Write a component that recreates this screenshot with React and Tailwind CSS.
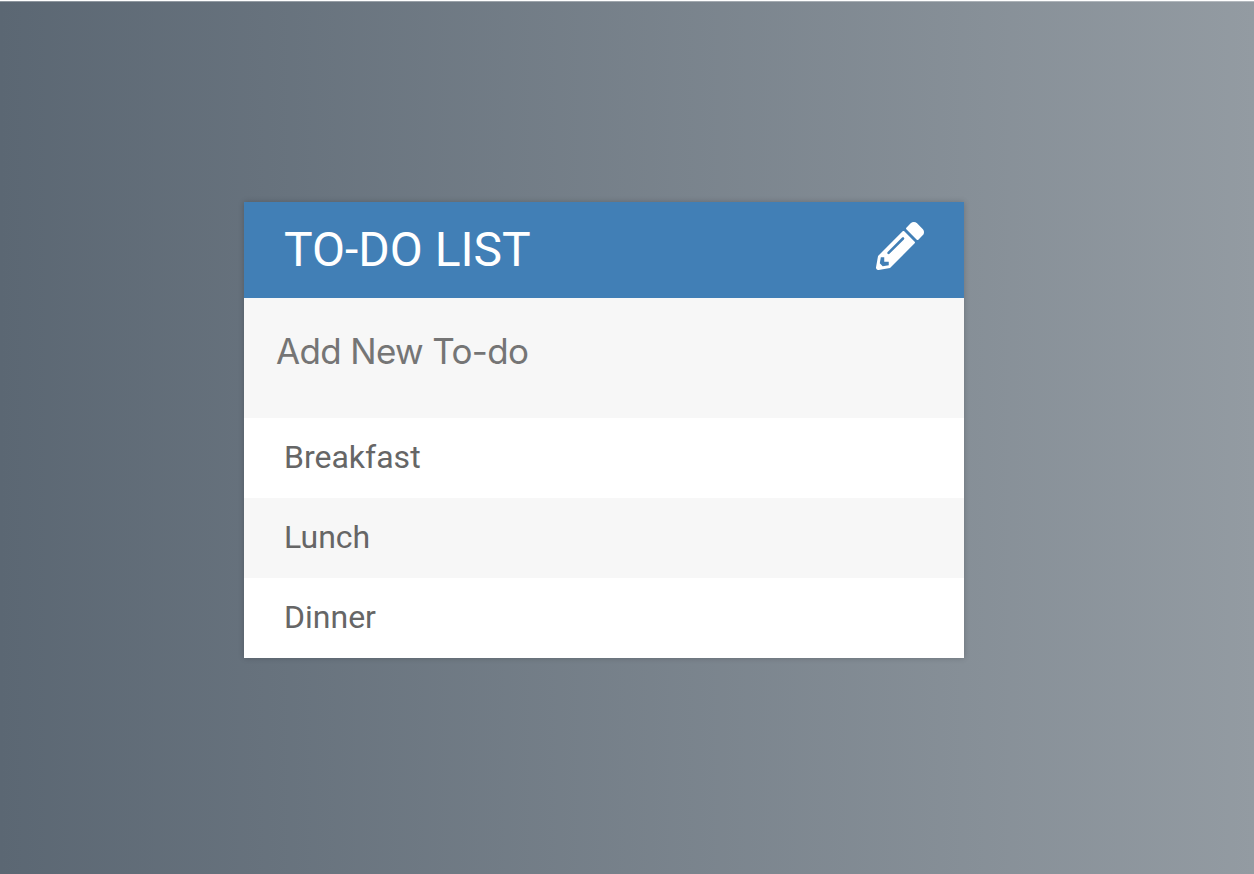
import React from "react";
import { FaPencilAlt } from "react-icons/fa";

const todos = ["Breakfast", "Lunch", "Dinner"];

export default function App() {
  return (
    <div className="h-[874px] w-[1254px] overflow-hidden border-t border-white bg-[linear-gradient(to_right,#5b6773,#939ba2)] pt-[201px] pl-[244px] font-['Roboto',sans-serif] shadow-[inset_0_1px_0_rgba(255,255,255,0.3)]">
      <div className="w-[720px] bg-[#f7f7f7] shadow-[0_0_6px_rgba(0,0,0,0.2)]">
        <h1 className="flex h-24 items-center justify-between bg-[#417fb6] px-10 text-[48px] font-normal text-white">
          <span>TO-DO LIST</span>
          <FaPencilAlt className="mb-2 size-12" />
        </h1>
        <input
          type="text"
          placeholder="Add New To-do"
          className="block h-[120px] w-full pb-3.5 pl-8 font-['Inter',sans-serif] text-[35px] tracking-[-0.65px] text-[#757575] outline-none placeholder:text-[#757575]"
        />
        <ul>
          {todos.map((todo) => (
            <li
              key={todo}
              className="h-20 px-10 text-[32px] leading-[78px] text-[#666666] odd:bg-white even:bg-[#f7f7f7]"
            >
              {todo}
            </li>
          ))}
        </ul>
      </div>
    </div>
  );
}
